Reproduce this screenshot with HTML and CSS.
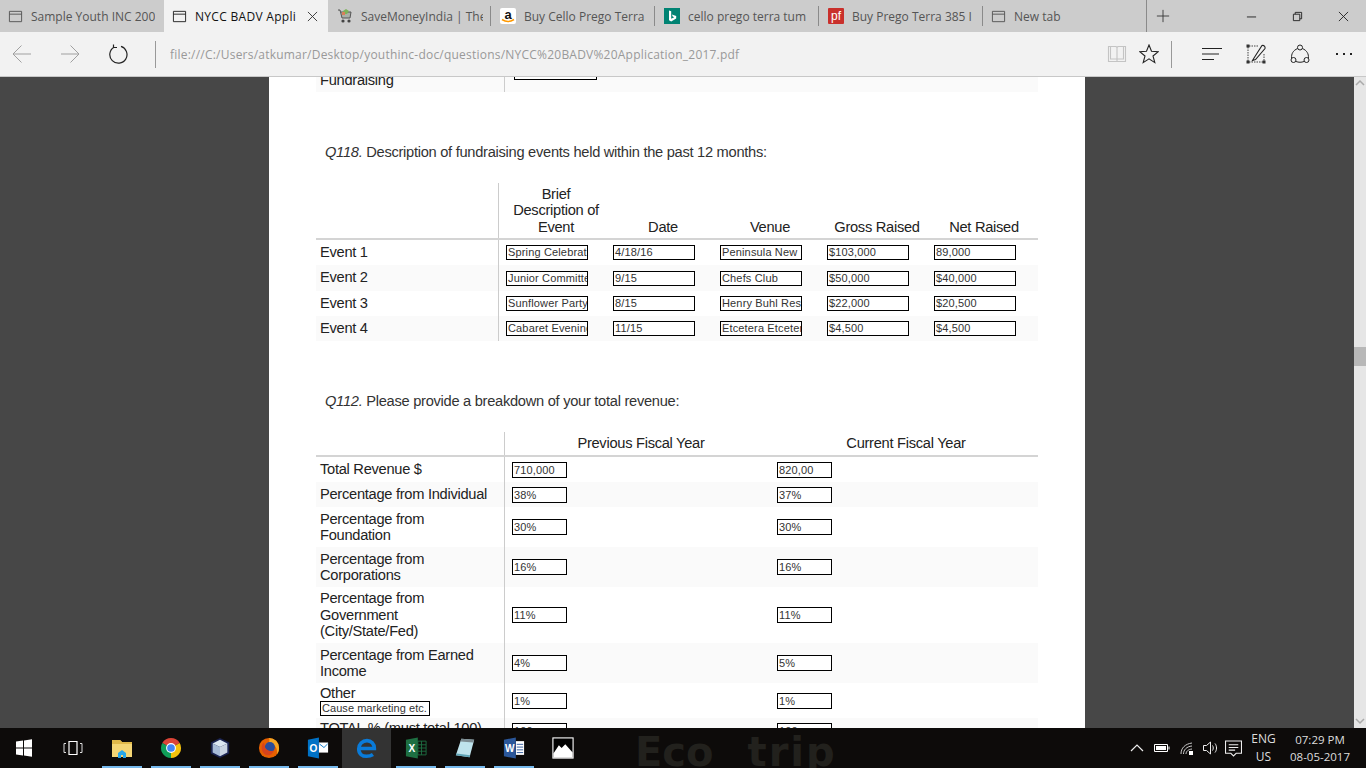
FILE: index.html
```html
<!DOCTYPE html>
<html lang="en">
<head>
    <meta charset="UTF-8">
    <meta name="viewport" content="width=device-width, initial-scale=1.0">
    <title>NYCC BADV Application</title>
    <link rel="stylesheet" href="styles.css">
</head>
<body>
    <div class="tabstrip">
        <div class="tab">
            <svg class="fav" viewBox="0 0 16 16"><path d="M1.500 2.500h13v11h-13zM1.500 5.500h13" fill="none" stroke="#555"/></svg>
            <span class="tab-title">Sample Youth INC 200</span>
        </div>
        <div class="tab active">
            <svg class="fav" viewBox="0 0 16 16"><path d="M1.500 2.500h13v11h-13zM1.500 5.500h13" fill="none" stroke="#222"/></svg>
            <span class="tab-title">NYCC BADV Appli</span>
            <svg class="tab-close" viewBox="0 0 12 12"><path d="M1 1l10 10M11 1L1 11" stroke="#333" fill="none"/></svg>
        </div>
        <div class="tab site sep tab-narrow">
            <svg class="fav" viewBox="0 0 16 16"><path d="M1 2l2 0 2 8h8l1-6H4" fill="#a9b0a8" stroke="#555"/><path d="M6 3l3-2 3 2-2 3H7z" fill="#7cb35a"/><path d="M5 4h3v3H5z" fill="#d9805a"/><circle cx="6" cy="13" r="1.600" fill="#444"/><circle cx="12" cy="13" r="1.600" fill="#444"/></svg>
            <span class="tab-title">SaveMoneyIndia | The</span>
        </div>
        <div class="tab site sep">
            <svg class="fav" viewBox="0 0 16 16"><rect width="16" height="16" rx="2" fill="#fff"/><text x="8" y="11" class="fav-a">a</text><path d="M2 11.500q6 4 12 0" fill="none" stroke="#f90" stroke-width="1.600"/></svg>
            <span class="tab-title">Buy Cello Prego Terra</span>
        </div>
        <div class="tab site sep">
            <svg class="fav" viewBox="0 0 16 16"><rect width="16" height="16" fill="#008373"/><path d="M5 2.500l2.200.8v7.500l3-1.500-1.500-.8-.8-2 4.300 1.500v2.500L7.200 13.500 5 12.300z" fill="#fff"/></svg>
            <span class="tab-title">cello prego terra tum</span>
        </div>
        <div class="tab site sep">
            <svg class="fav" viewBox="0 0 16 16"><rect width="16" height="16" rx="1" fill="#c9302c"/><text x="8" y="12" class="fav-pf">pf</text></svg>
            <span class="tab-title">Buy Prego Terra 385 I</span>
        </div>
        <div class="tab tab-narrow">
            <svg class="fav" viewBox="0 0 16 16"><path d="M1.500 2.500h13v11h-13zM1.500 5.500h13" fill="none" stroke="#555"/></svg>
            <span class="tab-title">New tab</span>
        </div>
        <div class="tab-add">
            <svg class="glyph" viewBox="0 0 16 16"><path d="M8 1v14M1 8h14" stroke="#333" fill="none"/></svg>
        </div>
        <div class="win-buttons">
            <div class="win-btn"><svg class="win-glyph" viewBox="0 0 12 12"><path d="M1 6.500h10" stroke="#222" fill="none"/></svg></div>
            <div class="win-btn"><svg class="win-glyph" viewBox="0 0 12 12"><path d="M1.500 3.500h7v7h-7zM3.500 3.500v-2h7v7h-2" stroke="#222" fill="none"/></svg></div>
            <div class="win-btn"><svg class="win-glyph" viewBox="0 0 12 12"><path d="M1 1l10 10M11 1L1 11" stroke="#222" fill="none"/></svg></div>
        </div>
    </div>

    <div class="toolbar">
        <div class="tool tool-first"><svg class="tool-icon" viewBox="0 0 20 20"><path d="M19 10H1M9.500 1.500L1 10l8.500 8.500" fill="none" stroke="#a0a0a0"/></svg></div>
        <div class="tool"><svg class="tool-icon" viewBox="0 0 20 20"><path d="M1 10h18M10.500 1.500L19 10l-8.500 8.500" fill="none" stroke="#a0a0a0"/></svg></div>
        <div class="tool tool-reload"><svg class="tool-icon" viewBox="0 0 20 20"><path d="M6 3.200A8.600 8.600 0 1 0 13 2.400M5.500 0.500V3.500H9" fill="none" stroke="#222" stroke-width="1.200"/></svg></div>
        <div class="tool-divider divider-url"></div>
        <div class="url">file:///C:/Users/atkumar/Desktop/youthinc-doc/questions/NYCC%20BADV%20Application_2017.pdf</div>
        <div class="tool tool-sm"><svg class="tool-icon" viewBox="0 0 20 20"><path d="M1.500 2.500h7.500l1 1 1-1h7.500v15h-17zM10 3.500v14M3.500 2.500v12.500h6.500M16.500 2.500v12.500h-6.500" fill="none" stroke="#c4c4c4" stroke-width="1.100"/></svg></div>
        <div class="tool tool-sm tool-star"><svg class="tool-icon" viewBox="0 0 20 20"><path d="M10 1l2.500 6.300 6.800.4-5.300 4.300 1.800 6.600-5.800-3.700-5.800 3.700 1.800-6.600L.7 7.700l6.800-.4z" fill="none" stroke="#222" stroke-width="1.100"/></svg></div>
        <div class="tool-divider"></div>
        <div class="tool tool-hub"><svg class="tool-icon" viewBox="0 0 20 20"><path d="M0 4.500h20M0 10h17M0 15.500h12" fill="none" stroke="#222" stroke-width="1.100"/></svg></div>
        <div class="tool"><svg class="tool-icon" viewBox="0 0 20 20"><path d="M2 3v14M18 10v7M3 2h9M3 18h14" fill="none" stroke="#444" stroke-dasharray="1.500 1"/><path d="M0.500 0.500h3v3h-3zM0.500 16.500h3v3h-3zM16.500 16.500h3v3h-3z" fill="#333"/><path d="M8 14l-1.500 2.500 3-1L19 4.500c.5-2-1-3.500-3-3z" fill="none" stroke="#222" stroke-width="1.100"/></svg></div>
        <div class="tool"><svg class="tool-icon" viewBox="0 0 20 20"><circle cx="10" cy="3.500" r="2.500" fill="none" stroke="#222"/><circle cx="3.500" cy="16" r="2.500" fill="none" stroke="#222"/><circle cx="16.500" cy="16" r="2.500" fill="none" stroke="#222"/><path d="M7.600 4.500C3 6.500 1.200 10 1.600 14M12.400 4.500c4.600 2 6.400 5.500 6 9.500M6 17.500c2.500 1 5.500 1 8 0" fill="none" stroke="#222"/></svg></div>
        <div class="tool"><svg class="tool-icon" viewBox="0 0 20 20"><path d="M2 9h2v2H2zM9 9h2v2H9zM16 9h2v2h-2z" fill="#222"/></svg></div>
    </div>

    <div class="workspace">
        <div class="viewer">
            <div class="page">
                <div class="grid grid-revenue row-cut">
                    <div class="label cut-label">Fundraising</div>
                    <div class="cell"><div class="field field-cut"></div></div>
                    <div class="cell"></div>
                </div>

                <p class="question"><em>Q118.</em> Description of fundraising events held within the past 12 months:</p>

                <div class="grid grid-events grid-head event-head">
                    <div class="label"></div>
                    <div class="head-cell">Brief Description of Event</div>
                    <div class="head-cell">Date</div>
                    <div class="head-cell">Venue</div>
                    <div class="head-cell">Gross Raised</div>
                    <div class="head-cell">Net Raised</div>
                </div>
                <div class="grid grid-events event-row">
                    <div class="label">Event 1</div>
                    <div class="cell"><div class="field field-wide">Spring Celebrati</div></div>
                    <div class="cell"><div class="field field-wide">4/18/16</div></div>
                    <div class="cell"><div class="field field-wide">Peninsula New</div></div>
                    <div class="cell"><div class="field field-wide">$103,000</div></div>
                    <div class="cell"><div class="field field-wide">89,000</div></div>
                </div>
                <div class="grid grid-events event-row shaded taller">
                    <div class="label">Event 2</div>
                    <div class="cell"><div class="field field-wide">Junior Committee</div></div>
                    <div class="cell"><div class="field field-wide">9/15</div></div>
                    <div class="cell"><div class="field field-wide">Chefs Club</div></div>
                    <div class="cell"><div class="field field-wide">$50,000</div></div>
                    <div class="cell"><div class="field field-wide">$40,000</div></div>
                </div>
                <div class="grid grid-events event-row">
                    <div class="label">Event 3</div>
                    <div class="cell"><div class="field field-wide">Sunflower Party</div></div>
                    <div class="cell"><div class="field field-wide">8/15</div></div>
                    <div class="cell"><div class="field field-wide">Henry Buhl Resi</div></div>
                    <div class="cell"><div class="field field-wide">$22,000</div></div>
                    <div class="cell"><div class="field field-wide">$20,500</div></div>
                </div>
                <div class="grid grid-events event-row shaded">
                    <div class="label">Event 4</div>
                    <div class="cell"><div class="field field-wide">Cabaret Evening</div></div>
                    <div class="cell"><div class="field field-wide">11/15</div></div>
                    <div class="cell"><div class="field field-wide">Etcetera Etcetera</div></div>
                    <div class="cell"><div class="field field-wide">$4,500</div></div>
                    <div class="cell"><div class="field field-wide">$4,500</div></div>
                </div>

                <p class="question"><em>Q112.</em> Please provide a breakdown of your total revenue:</p>

                <div class="grid grid-revenue grid-head revenue-head">
                    <div class="label"></div>
                    <div class="head-cell">Previous Fiscal Year</div>
                    <div class="head-cell">Current Fiscal Year</div>
                </div>
                <div class="grid grid-revenue h25">
                    <div class="label">Total Revenue $</div>
                    <div class="cell"><div class="field">710,000</div></div>
                    <div class="cell"><div class="field">820,00</div></div>
                </div>
                <div class="grid grid-revenue h25 shaded">
                    <div class="label">Percentage from Individual</div>
                    <div class="cell"><div class="field">38%</div></div>
                    <div class="cell"><div class="field">37%</div></div>
                </div>
                <div class="grid grid-revenue h40">
                    <div class="label"><span>Percentage from<br>Foundation</span></div>
                    <div class="cell"><div class="field">30%</div></div>
                    <div class="cell"><div class="field">30%</div></div>
                </div>
                <div class="grid grid-revenue h40 shaded">
                    <div class="label"><span>Percentage from<br>Corporations</span></div>
                    <div class="cell"><div class="field">16%</div></div>
                    <div class="cell"><div class="field">16%</div></div>
                </div>
                <div class="grid grid-revenue h56">
                    <div class="label"><span>Percentage from<br>Government<br>(City/State/Fed)</span></div>
                    <div class="cell"><div class="field">11%</div></div>
                    <div class="cell"><div class="field">11%</div></div>
                </div>
                <div class="grid grid-revenue h40 shaded">
                    <div class="label"><span>Percentage from Earned<br>Income</span></div>
                    <div class="cell"><div class="field">4%</div></div>
                    <div class="cell"><div class="field">5%</div></div>
                </div>
                <div class="grid grid-revenue h35">
                    <div class="label">Other
                        <div class="field field-other">Cause marketing etc.</div>
                    </div>
                    <div class="cell"><div class="field">1%</div></div>
                    <div class="cell"><div class="field">1%</div></div>
                </div>
                <div class="grid grid-revenue h25 shaded">
                    <div class="label label-top">TOTAL % (must total 100)</div>
                    <div class="cell"><div class="field">100</div></div>
                    <div class="cell"><div class="field">100</div></div>
                </div>
            </div>
        </div>
        <div class="scrollbar">
            <svg class="scroll-arrow" viewBox="0 0 12 8"><path d="M2 6l4-4 4 4" fill="none" stroke="#aaa" stroke-width="1.500"/></svg>
            <div class="scroll-thumb"></div>
            <svg class="scroll-arrow scroll-arrow-down" viewBox="0 0 12 8"><path d="M2 2l4 4 4-4" fill="none" stroke="#aaa" stroke-width="1.500"/></svg>
        </div>
    </div>

    <div class="taskbar">
        <div class="task">
            <svg class="task-icon" viewBox="0 0 20 20"><path d="M2 3.600l7-1v7H2zM10 2.400l8-1.200V9.600h-8zM2 10.400h7v7l-7-1zM10 10.400h8v8.400l-8-1.200z" fill="#fff"/></svg>
        </div>
        <div class="task">
            <svg class="task-icon" viewBox="0 0 20 20"><path d="M6 3.500h8v13H6z" fill="none" stroke="#fff" stroke-width="1.200"/><path d="M3 5.500H1v9h2M17 5.500h2v9h-2" fill="none" stroke="#ddd"/></svg>
        </div>
        <div class="task open">
            <svg class="task-icon-lg" viewBox="0 0 22 22"><path d="M1 3h8l2 2h10v15H1z" fill="#f4d675"/><path d="M1 3h8l2 2h10v2H1z" fill="#e0b94a"/><path d="M7 21v-5l4-3 4 3v5h-3v-3h-2v3z" fill="#28a8ea"/></svg>
        </div>
        <div class="task open">
            <svg class="task-icon-lg" viewBox="0 0 24 24"><path d="M12 12L2.500 6.500A11 11 0 0 1 21.500 6.500z" fill="#db4437"/><path d="M12 12l9.500-5.500A11 11 0 0 1 12 23z" fill="#f4c20d"/><path d="M12 12v11A11 11 0 0 1 2.500 6.500z" fill="#0f9d58"/><circle cx="12" cy="12" r="5.400" fill="#fff"/><circle cx="12" cy="12" r="4.200" fill="#4285f4"/></svg>
        </div>
        <div class="task open">
            <svg class="task-icon-lg" viewBox="0 0 24 24"><path d="M12 1l10 5v12l-10 5-10-5V6z" fill="#1a2350"/><path d="M12 3l8 4-8 4-8-4z" fill="#dbe7f2"/><path d="M4 7l8 4v10l-8-4z" fill="#a8bcd8"/><path d="M20 7l-8 4v10l8-4z" fill="#c9d4e2"/></svg>
        </div>
        <div class="task open">
            <svg class="task-icon-lg" viewBox="0 0 24 24"><circle cx="12" cy="12" r="11" fill="#e66000"/><path d="M12 1a11 11 0 0 1 11 11c0 3-1 5-2 7 0-5-1-9-5-11-1 1-3 1-4 0 0-3 1-5 0-7z" fill="#f5a623"/><circle cx="13" cy="11" r="5.500" fill="#2a4d9b"/><path d="M6 6c2 2 1 4 2 6s5 4 8 3-1 5-5 5-7-4-7-8 1-4 2-6z" fill="#d8441c"/></svg>
        </div>
        <div class="task open">
            <svg class="task-icon-lg" viewBox="0 0 24 24"><path d="M1 3l12-2.500v23L1 21z" fill="#0072c6"/><rect x="13" y="6" width="10" height="11" fill="#fff"/><path d="M13.500 7.500l5 4 4-4" fill="none" stroke="#0072c6"/><text x="7" y="16" class="logo-letter">O</text></svg>
        </div>
        <div class="task current">
            <svg class="task-icon-lg" viewBox="0 0 24 24"><path d="M4 12.500h16c0-5-3.500-8.500-8-8.500-5 0-9 4-9 9 0 5.500 4 8 8.500 8 2.500 0 5-.6 7-2" fill="none" stroke="#0a7bd9" stroke-width="4"/></svg>
        </div>
        <div class="task open">
            <svg class="task-icon-lg" viewBox="0 0 24 24"><path d="M1 3l13-2.500v23L1 21z" fill="#1e6f42"/><path d="M14 4.500h9v15h-9zM14 8.500h9M14 12h9M14 15.500h9M18 4.500v15" fill="none" stroke="#1e6f42"/><text x="7.500" y="16" class="logo-letter">X</text></svg>
        </div>
        <div class="task open">
            <svg class="task-icon-lg" viewBox="0 0 24 24"><path d="M8 2l14 1-5 19L2 20z" fill="#bfe3ec"/><path d="M8 2l14 1-1 3L7 5z" fill="#7d8c92"/><path d="M2 20l15 2 .6-2-14.800-2z" fill="#5ea3b5"/></svg>
        </div>
        <div class="task open">
            <svg class="task-icon-lg" viewBox="0 0 24 24"><path d="M14 4.500h9v15h-9z" fill="#fff"/><path d="M15 8h7M15 11h7M15 14h7M15 17h7" stroke="#2b579a"/><path d="M1 3l13-2.500v23L1 21z" fill="#2b579a"/><text x="7.500" y="16" class="logo-letter">W</text></svg>
        </div>
        <div class="task">
            <svg class="task-icon-lg" viewBox="0 0 24 24"><rect x="1" y="1" width="22" height="22" fill="#000" stroke="#fff" stroke-width="1.200"/><path d="M1.500 18l6-9 3 3 4-4 8 9v5.500h-21z" fill="#fff"/></svg>
        </div>
        <div class="wallpaper" aria-hidden="true"><span class="wall-eco">Eco</span><span class="wall-trip">trip</span></div>
        <div class="tray">
            <svg class="tray-icon" viewBox="0 0 16 16"><path d="M2 11l6-6 6 6" fill="none" stroke="#eee" stroke-width="1.200"/></svg>
            <svg class="tray-icon" viewBox="0 0 16 16"><path d="M.5 4.500h13v7H.5z" fill="none" stroke="#fff"/><path d="M2 6h10v4H2z" fill="#fff"/><path d="M14.500 6.500h1v3h-1z" fill="#fff"/></svg>
            <svg class="tray-icon tray-tight" viewBox="0 0 16 16"><path d="M2 14c0-6 4-10 11-11M4.500 14c0-4 3-7.500 8.500-8M7 14c0-2.500 2-4.500 6-5" fill="none" stroke="#ccc"/><path d="M10 11h4v4h-4z" fill="#fff"/></svg>
            <svg class="tray-icon tray-tight" viewBox="0 0 16 16"><path d="M1.500 5.500h3l4-3.500v12l-4-3.500h-3z" fill="none" stroke="#eee"/><path d="M10.500 5.500c1 1.500 1 3.500 0 5M13 3.500c2 2.500 2 6.500 0 9" fill="none" stroke="#eee"/></svg>
            <svg class="tray-icon tray-note" viewBox="0 0 16 16"><path d="M.5 1h15v11.500h-5L8 15l-2.500-2.500h-5z" fill="none" stroke="#eee"/><path d="M3.500 4.500h9M3.500 7h9M3.500 9.500h6" stroke="#eee"/></svg>
            <div class="tray-lang">ENG<br>US</div>
            <div class="tray-clock">07:29 PM<br>08-05-2017</div>
        </div>
    </div>
</body>
</html>
```

FILE: styles.css
```css
* { box-sizing: border-box; }
html, body { margin: 0; height: 768px; overflow: hidden; }
body { font-family: "Liberation Sans", Arial, sans-serif; background-color: #474747; }
svg { display: block; }

/* tab strip */
.tabstrip { display: flex; height: 32px; background-color: #ccc; font-family: "Open Sans", "Noto Sans", sans-serif; font-size: 12px; color: #555; }
.tab { display: flex; align-items: center; width: 164px; flex: none; padding-left: 8px; }
.tab.tab-narrow { width: 163px; }
.tab.active { background-color: #f2f2f2; color: #111; }
.tab.site { padding-left: 9px; }
.tab.sep { background: linear-gradient(#8a8a8a, #8a8a8a) right center / 1px 20px no-repeat; }
.fav { width: 15px; height: 15px; flex: none; margin-right: 8px; }
.tab.site .fav { width: 16px; height: 16px; }
.fav-a { font: bold 13px "Liberation Sans", sans-serif; text-anchor: middle; fill: #111; }
.fav-pf { font: 12px "Liberation Sans", sans-serif; text-anchor: middle; fill: #fff; }
.tab-title { width: 124px; overflow: hidden; white-space: nowrap; }
.tab.active .tab-title { width: 102px; letter-spacing: .3px; }
.tab.site .tab-title { width: 122px; }
.tab-close { width: 11px; height: 11px; margin-left: 10px; }
.tab-add { display: flex; align-items: center; justify-content: center; width: 33px; border-left: 1px solid #8a8a8a; }
.glyph { width: 14px; height: 14px; }
.win-buttons { display: flex; margin-left: auto; }
.win-btn { display: flex; align-items: center; justify-content: center; width: 46px; }
.win-glyph { width: 11px; height: 11px; }

/* address bar */
.toolbar { display: flex; align-items: center; height: 45px; background-color: #f2f2f2; border-bottom: 1px solid #c8c8c8; }
.tool { display: flex; align-items: center; justify-content: center; width: 44px; height: 44px; flex: none; }
.tool-first { width: 48px; margin-left: -2px; }
.tool-first + .tool { width: 48px; }
.tool-reload { width: 48px; }
.tool-sm { width: 32px; }
.tool-star { margin-right: 6px; }
.tool-hub { margin-left: 18px; }
.tool-icon { width: 20px; height: 20px; }
.tool-divider { width: 1px; height: 27px; background-color: #999; flex: none; }
.divider-url { margin-left: 13px; }
.url { flex: 1; margin-left: 14px; font-family: "Open Sans", "Noto Sans", sans-serif; font-size: 12px; letter-spacing: .22px; color: #999; white-space: nowrap; overflow: hidden; }

/* pdf viewer */
.workspace { display: flex; height: 651px; }
.viewer { flex: 1; padding-left: 269px; overflow: hidden; background-color: #474747; }
.page { width: 816px; height: 651px; padding: 0 47px; overflow: hidden; background-color: #fff; font-size: 14.67px; line-height: 16.4px; letter-spacing: -.28px; color: #222; }
.scrollbar { display: flex; flex-direction: column; width: 12px; background-color: #e6e6e6; }
.scroll-arrow { width: 12px; height: 8px; margin-top: 2px; }
.scroll-thumb { height: 19px; margin-top: 260px; background-color: #b8b8b8; }
.scroll-arrow-down { margin-top: auto; margin-bottom: 3px; }

.question { height: 18px; margin: 50px 0 23px; padding-left: 9px; line-height: 20px; color: #333; }

.grid { display: grid; }
.grid-events { grid-template-columns: 183px repeat(5, 107px) 4px; }
.grid-revenue { grid-template-columns: 189px 265px 265px 3px; }
.shaded { background-color: #fafafa; }

.grid-head { border-bottom: 2px solid #d4d4d4; }
.event-head { height: 57px; }
.revenue-head { height: 25px; }
.head-cell { display: flex; align-items: flex-end; justify-content: center; padding: 0 0 3px 7px; text-align: center; }
.revenue-head .head-cell { padding-bottom: 4px; }

.label { display: flex; flex-direction: column; justify-content: center; padding-left: 4px; border-right: 1px solid #ccc; }
.label-top { justify-content: flex-start; padding-top: 2px; white-space: nowrap; }
.cell { display: flex; align-items: center; padding-left: 7px; }

.event-row { height: 25px; }
.event-row.taller { height: 26px; }
.event-row.taller .label { padding-bottom: 1px; }
.h25 { height: 25px; }
.h35 { height: 35px; }
.h40 { height: 40px; }
.h56 { height: 56px; }

.row-cut { height: 15px; background-color: #fafafa; overflow: hidden; }
.cut-label { display: block; margin-top: -5px; height: 20px; }
.row-cut .cell { display: block; padding-left: 9px; }

.field { width: 55px; height: 16px; padding: 0 1px; border: 1px solid #000; background-color: #fff; font-size: 11px; line-height: 14px; letter-spacing: .15px; color: #333; white-space: nowrap; overflow: hidden; }
.field-wide { width: 82px; height: 15px; line-height: 13px; }
.field-other { width: 110px; height: 15px; margin-top: -1px; line-height: 13px; letter-spacing: .05px; }
.field-cut { width: 83px; height: 3px; border-top: 0; }

/* windows taskbar */
.taskbar { display: flex; height: 40px; overflow: hidden; background-color: #0d0b0a; font-family: "Open Sans", "Noto Sans", sans-serif; font-size: 12px; color: #ddd; }
.task { display: flex; align-items: center; justify-content: center; width: 49px; height: 40px; flex: none; }
.task:first-child { width: 48px; }
.task.open { background: linear-gradient(#76b9ed, #76b9ed) center bottom / 40px 2px no-repeat; }
.task.current { background-color: #333; }
.task-icon { width: 20px; height: 20px; }
.task-icon-lg { width: 22px; height: 22px; }
.logo-letter { font: bold 11px "Liberation Sans", sans-serif; text-anchor: middle; fill: #fff; }
.wallpaper { flex: 1; display: flex; padding: 0 0 0 48px; font-family: "DejaVu Sans", sans-serif; font-weight: bold; font-size: 40px; line-height: 48px; color: #22211d; white-space: nowrap; overflow: hidden; }
.wall-trip { margin-left: 34px; letter-spacing: 2px; }
.tray { display: flex; align-items: center; flex: none; width: 237px; }
.tray-icon { width: 16px; height: 16px; margin-right: 9px; flex: none; }
.tray-icon.tray-tight { margin-right: 7px; }
.tray-note { width: 17px; height: 17px; margin-right: 0; }
.tray-lang { width: 43px; text-align: center; line-height: 18px; }
.tray-clock { width: 70px; font-size: 11.5px; text-align: center; line-height: 17px; }
```
